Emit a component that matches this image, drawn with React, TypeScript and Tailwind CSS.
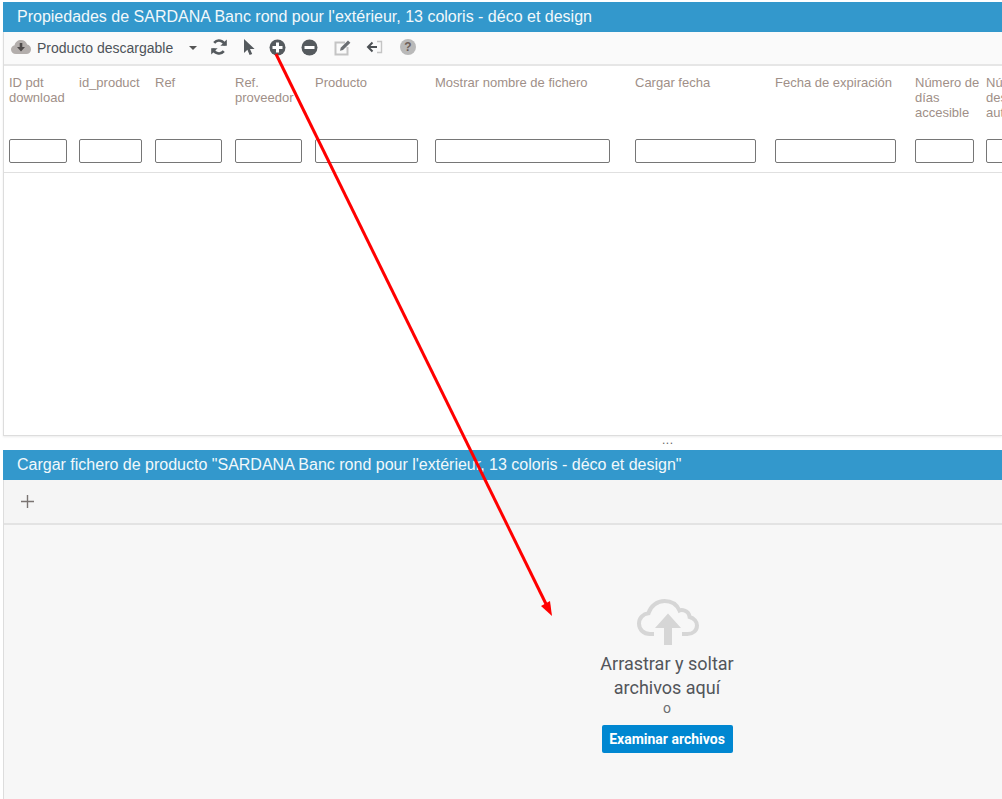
import React from "react";

interface Column {
  label: string;
  width: string;
  inputWidth: string;
}

const columns: Column[] = [
  { label: "ID pdt download", width: "w-[70px]", inputWidth: "w-[58px]" },
  { label: "id_product", width: "w-[76px]", inputWidth: "w-[63px]" },
  { label: "Ref", width: "w-[80px]", inputWidth: "w-[67px]" },
  { label: "Ref. proveedor", width: "w-[80px]", inputWidth: "w-[67px]" },
  { label: "Producto", width: "w-[120px]", inputWidth: "w-[103px]" },
  { label: "Mostrar nombre de fichero", width: "w-[200px]", inputWidth: "w-[175px]" },
  { label: "Cargar fecha", width: "w-[140px]", inputWidth: "w-[121px]" },
  { label: "Fecha de expiración", width: "w-[140px]", inputWidth: "w-[121px]" },
  { label: "Número de días accesible", width: "w-[71px]", inputWidth: "w-[59px]" },
  { label: "Número de descargas autorizadas", width: "w-[70px]", inputWidth: "w-[59px]" },
];

const iconGray = "#555a5e";

const ToolbarIcons = () => (
  <div className="mb-[2px] flex items-center">
    {/* refrescar */}
    <svg width="18" height="18" viewBox="0 0 18 18" className="ml-[13px]" fill="none">
      <path d="M15 7.4A6.2 6.2 0 0 0 4.2 4.8" stroke={iconGray} strokeWidth="2.6" />
      <path d="M16.8 1.4v6.4h-6.4z" fill={iconGray} />
      <path d="M3 10.6a6.2 6.2 0 0 0 10.8 2.6" stroke={iconGray} strokeWidth="2.6" />
      <path d="M1.2 16.6v-6.4h6.4z" fill={iconGray} />
    </svg>
    {/* seleccionar */}
    <svg width="12" height="16" viewBox="0 0 12 16" className="ml-[15px]">
      <path d="M1 0v14l3.4-3.2L6.6 16l2.6-1.1L7 9.9h4.6z" fill={iconGray} />
    </svg>
    {/* añadir */}
    <svg width="17" height="17" viewBox="0 0 17 17" className="ml-[14px]">
      <circle cx="8.5" cy="8.5" r="8" fill={iconGray} />
      <path d="M7 3.5h3V7h3.5v3H10v3.5H7V10H3.5V7H7z" fill="#fff" />
    </svg>
    {/* quitar */}
    <svg width="17" height="17" viewBox="0 0 17 17" className="ml-[15px]">
      <circle cx="8.5" cy="8.5" r="8" fill={iconGray} />
      <rect x="3.5" y="7" width="10" height="3" fill="#fff" />
    </svg>
    {/* editar */}
    <svg width="18" height="17" viewBox="0 0 18 17" className="ml-[16px]" fill="none">
      <path d="M11 3.5H1.5v12h12V8" stroke="#c4c4c4" strokeWidth="2" />
      <path d="M6 11.8l.7-3L14 1.4l2.4 2.4-7.4 7.3z" fill="#6a6e72" />
    </svg>
    {/* volver */}
    <svg width="17" height="14" viewBox="0 0 17 14" className="ml-[14px]" fill="none">
      <path d="M11 7H2.5M6.5 2.5L2 7l4.5 4.5" stroke="#4c5054" strokeWidth="2" />
      <path d="M11 1.5h4.5v11H11" stroke="#c4c4c4" strokeWidth="1.4" />
    </svg>
    {/* ayuda */}
    <div className="ml-[17px] flex h-[16px] w-[16px] items-center justify-center rounded-full bg-[#b9b9b9] text-[12px] font-bold leading-none text-[#6d5f5a]">
      ?
    </div>
  </div>
);

const UploadCloud = () => (
  <svg width="62" height="46" viewBox="0 0 62 46" fill="none" className="ml-[2px]">
    <path
      d="M17 35H13C6.5 35 2 30.5 2 24.5C2 19 6 14.8 11.5 14.2C13.5 6.8 20.5 2 27.5 2C34.5 2 40 6 42.5 11.5C44 10.8 45.5 10.8 47 11.3C50.5 12.3 52.3 15 52.6 18C57 19.2 60 22.5 60 26.5C60 31.5 56 35 50.5 35H45"
      stroke="#d6d6d6"
      strokeWidth="4"
    />
    <path d="M31 14.5L44 29H35V46H27V29H18z" fill="#d6d6d6" />
  </svg>
);

export default function App() {
  return (
    <div className="relative h-[799px] w-[1002px] overflow-hidden bg-white pl-[3px] pt-[2px] font-['Liberation_Sans',sans-serif]">
      {/* Panel propiedades */}
      <div className="flex h-[30px] items-center bg-[#3398cc] pl-[14px] text-[16px] text-[#f2f8fb]">
        Propiedades de SARDANA Banc rond pour l'extérieur, 13 coloris - déco et design
      </div>
      <div className="h-[404px] border-b border-l border-[#dddddd] shadow-[0_1px_2px_rgba(0,0,0,0.08)]">
        <div className="flex h-[34px] items-center border-b-2 border-[#e6e6e6] bg-[#fafafa] pl-[7px]">
          <svg width="20" height="16" viewBox="0 0 20 16" className="mb-[2px]">
            <path
              d="M5 15C2 15 0 13 0 10.5C0 8.2 1.6 6.6 3.6 6.2C4.2 3 6.8 1 10 1C13 1 15.4 2.8 16.2 5.6C18.4 6 20 8 20 10.4C20 13 18 15 15.4 15z"
              fill="#b3aeac"
            />
            <path d="M8.7 4h2.6v4H14l-4 4.6L6 8h2.7z" fill="#4e4a4a" />
          </svg>
          <span className="ml-[6px] w-[152px] text-[14px] text-[#4d5359]">Producto descargable</span>
          <span className="h-0 w-0 border-x-[4px] border-t-[4px] border-x-transparent border-t-[#555555]" />
          <ToolbarIcons />
        </div>

        <div className="flex h-[107px] border-b border-[#e0e0e0] pl-[5px]">
          {columns.map((col) => (
            <div key={col.label} className={`flex shrink-0 flex-col ${col.width}`}>
              <div className="h-[73px] pr-[4px] pt-[9px] text-[13px] leading-[15px] text-[#a08f88]">
                {col.label}
              </div>
              <input
                className={`h-[24px] rounded-[2px] border border-[#767676] bg-white ${col.inputWidth}`}
                readOnly
              />
            </div>
          ))}
        </div>
      </div>

      <div className="h-[14px] pl-[659px] text-[12px] leading-[8px] tracking-[0.5px] text-[#666666]">
        ...
      </div>

      {/* Panel carga de ficheros */}
      <div className="flex h-[30px] items-center bg-[#3398cc] pl-[14px] text-[16px] text-[#f2f8fb]">
        Cargar fichero de producto "SARDANA Banc rond pour l'extérieur, 13 coloris - déco et design"
      </div>
      <div className="h-[319px] border-l border-[#dddddd] bg-[#f7f7f7]">
        <div className="flex h-[45px] items-center border-b-2 border-[#e3e3e3] bg-[#f5f5f5] pl-[17px]">
          <svg width="13" height="13" viewBox="0 0 13 13">
            <path d="M6.5 0v13M0 6.5h13" stroke="#7a7472" strokeWidth="1.4" />
          </svg>
        </div>
        <div className="flex flex-col items-center pl-[328px] pt-[74px] font-['Roboto',sans-serif]">
          <UploadCloud />
          <div className="mt-[7px] w-[170px] text-center text-[18px] leading-[24px] text-[#52555a]">
            Arrastrar y soltar archivos aquí
          </div>
          <div className="text-[14px] leading-[17px] text-[#6a6d70]">o</div>
          <div className="mt-[8px] flex h-[28px] w-[131px] items-center justify-center rounded-[2px] bg-[#0087d1] text-[14px] font-bold text-white">
            Examinar archivos
          </div>
        </div>
      </div>

      {/* Flecha roja sobre la captura */}
      <svg className="pointer-events-none absolute left-0 top-0" width="1002" height="799" fill="none">
        <path d="M276 54L547 606" stroke="#ff0000" strokeWidth="3" />
        <path d="M552 616L541 606L550 601z" fill="#ff0000" />
      </svg>
    </div>
  );
}
